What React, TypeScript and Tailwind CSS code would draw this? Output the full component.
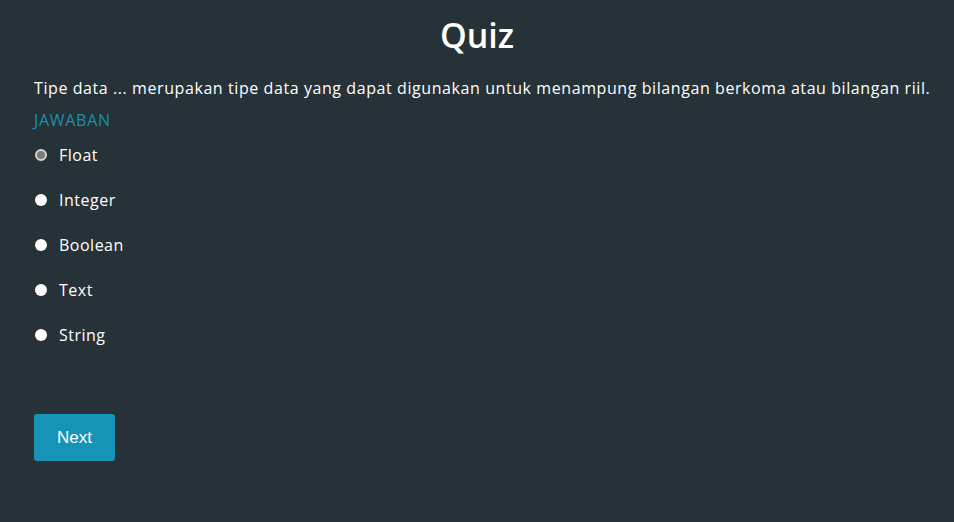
const options = ["Float", "Integer", "Boolean", "Text", "String"]

export default function App() {
  return (
    <div className="min-h-[522px] w-full bg-[#263238] text-white font-['Open_Sans',sans-serif]">
      <div className="px-[34px] pt-[13px]">
        <h1 className="text-center text-[34px] font-semibold leading-[44px]">Quiz</h1>
        <p className="mt-[19px] whitespace-nowrap text-[16px] leading-[24px] tracking-[0.58px]">
          Tipe data ... merupakan tipe data yang dapat digunakan untuk menampung bilangan berkoma atau bilangan riil.
        </p>
        <div className="mt-[10px] text-[16px] leading-[20px] tracking-[0.7px] text-[#1a8fae]">JAWABAN</div>
        <div className="mt-[2px] flex flex-col">
          {options.map((opt, i) => (
            <label key={opt} className="flex h-[45px] items-center gap-[12px]">
              <span
                className={
                  i === 0
                    ? "ml-[1px] h-[12px] w-[12px] rounded-full border-2 border-[#d4d4d4] bg-[#7b7b7b]"
                    : "ml-[1px] h-[12px] w-[12px] rounded-full bg-white"
                }
              />
              <span className="text-[16px] font-medium tracking-[0.5px]">{opt}</span>
            </label>
          ))}
        </div>
        <button className="mt-[57px] h-[47px] w-[81px] rounded-[3px] bg-[#1793b5] text-[17px] text-white font-['Liberation_Sans',sans-serif]">
          Next
        </button>
      </div>
    </div>
  )
}
